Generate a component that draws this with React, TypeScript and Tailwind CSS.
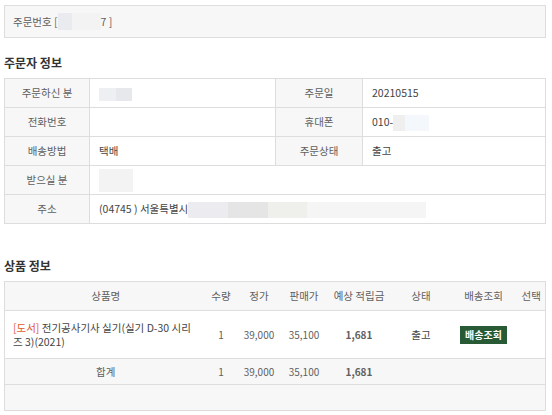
import React from "react";

const FONT = "font-['Noto_Sans_CJK_KR','Noto_Sans',sans-serif]";

// blurred (masked) personal data placeholder
function Blur({ w, h, colors }: { w: number; h: number; colors: string[] }) {
  return (
    <span className="inline-flex align-middle" style={{ width: w, height: h }}>
      {colors.map((c, i) => (
        <span key={i} className="flex-1 h-full" style={{ background: c }} />
      ))}
    </span>
  );
}

const labelCls =
  "bg-[#f7f7f7] border border-[#dddddd] text-center text-[#5f5f5f] font-normal h-[29px] p-0";
const valueCls = "border border-[#dddddd] text-left text-[#444] h-[29px] pl-[9px] py-0";

function InfoTable() {
  return (
    <table className="w-full border-collapse table-fixed text-[10.5px]">
      <colgroup>
        <col className="w-[85px]" />
        <col className="w-[186px]" />
        <col className="w-[87px]" />
        <col />
      </colgroup>
      <tbody>
        <tr>
          <th className={labelCls}>주문하신 분</th>
          <td className={valueCls}>
            <Blur w={33} h={13} colors={["#eeeff2", "#e6e8ec"]} />
          </td>
          <th className={labelCls}>주문일</th>
          <td className={`${valueCls} text-[#5f5f5f]`}>20210515</td>
        </tr>
        <tr>
          <th className={labelCls}>전화번호</th>
          <td className={valueCls}></td>
          <th className={labelCls}>휴대폰</th>
          <td className={`${valueCls} text-[#5f5f5f]`}>
            <span className="align-middle">010-</span>
            <Blur w={36} h={16} colors={["#efefef", "#f4f8fc", "#f4f8fc"]} />
          </td>
        </tr>
        <tr>
          <th className={labelCls}>배송방법</th>
          <td className={valueCls}>택배</td>
          <th className={labelCls}>주문상태</th>
          <td className={valueCls}>출고</td>
        </tr>
        <tr>
          <th className={labelCls}>받으실 분</th>
          <td className={valueCls} colSpan={3}>
            <Blur w={34} h={23} colors={["#f3f3f3"]} />
          </td>
        </tr>
        <tr>
          <th className={labelCls}>주소</th>
          <td className={`${valueCls} text-[#5f5f5f]`} colSpan={3}>
            <span className="align-middle">(04745 ) 서울특별시</span>
            <Blur
              w={238}
              h={16}
              colors={["#ebebf0", "#e5e5e5", "#efefeb", "#f5f5f5", "#f5f5f5", "#f5f5f5"]}
            />
          </td>
        </tr>
      </tbody>
    </table>
  );
}

const headCls =
  "bg-[#f7f7f7] border-y border-[#dddddd] text-[#5f5f5f] font-normal p-0 h-[29px] text-center";
const numCls = "text-center text-[#5f5f5f] text-[10px] p-0";

function ProductTable() {
  return (
    <table className="w-full border-collapse table-fixed text-[10.5px] border border-[#dddddd]">
      <colgroup>
        <col className="w-[202px]" />
        <col className="w-[29px]" />
        <col className="w-[47px]" />
        <col className="w-[43px]" />
        <col className="w-[67px]" />
        <col className="w-[57px]" />
        <col className="w-[68px]" />
        <col />
      </colgroup>
      <thead>
        <tr>
          <th className={headCls}>상품명</th>
          <th className={headCls}>수량</th>
          <th className={headCls}>정가</th>
          <th className={headCls}>판매가</th>
          <th className={headCls}>예상 적립금</th>
          <th className={headCls}>상태</th>
          <th className={headCls}>배송조회</th>
          <th className={headCls}>선택</th>
        </tr>
      </thead>
      <tbody>
        <tr className="h-[48px] bg-white">
          <td className="pl-[8px] pr-[10px] text-left text-[#444] leading-[14px] border-y border-[#dddddd]">
            <span className="text-[#e4572e]">[도서]</span> 전기공사기사 실기(실기 D-30 시리즈 3)(2021)
          </td>
          <td className={numCls}>1</td>
          <td className={numCls}>39,000</td>
          <td className={numCls}>35,100</td>
          <td className={`${numCls} font-bold text-[#3f5f3a]`}>1,681</td>
          <td className="text-center text-[#444] p-0">출고</td>
          <td className="text-center p-0">
            <button className="bg-[#275a35] text-white font-bold text-[10px] w-[47px] h-[18px] leading-[18px]">
              배송조회
            </button>
          </td>
          <td />
        </tr>
        <tr className="h-[26px] bg-[#f7f7f7] border-y border-[#dddddd]">
          <td className="text-center text-[#5f5f5f] p-0">합계</td>
          <td className={numCls}>1</td>
          <td className={numCls}>39,000</td>
          <td className={numCls}>35,100</td>
          <td className={`${numCls} font-bold text-[#3f5f3a]`}>1,681</td>
          <td />
          <td />
          <td />
        </tr>
        <tr className="h-[26px] bg-[#f7f7f7]">
          <td colSpan={8} />
        </tr>
      </tbody>
    </table>
  );
}

export default function App() {
  return (
    <div className={`${FONT} bg-white w-[552px] h-[415px] overflow-hidden`}>
      <div className="ml-[4px] w-[542px] pt-[5px]">
        {/* 주문번호 */}
        <div className="h-[33px] border border-[#dddddd] bg-[#f7f7f7] flex items-center pl-[8px] text-[10.5px] text-[#5f5f5f]">
          <span>주문번호 [</span>
          <Blur w={43} h={17} colors={["#eaebef", "#f3f3f3", "#f3f3f3"]} />
          <span>7 ]</span>
        </div>

        <h2 className="mt-[17px] text-[12px] font-bold text-[#333] leading-[16px]">주문자 정보</h2>
        <div className="mt-[7px]">
          <InfoTable />
        </div>

        <h2 className="mt-[34px] text-[12px] font-bold text-[#333] leading-[16px]">상품 정보</h2>
        <div className="mt-[7px]">
          <ProductTable />
        </div>
      </div>
    </div>
  );
}
